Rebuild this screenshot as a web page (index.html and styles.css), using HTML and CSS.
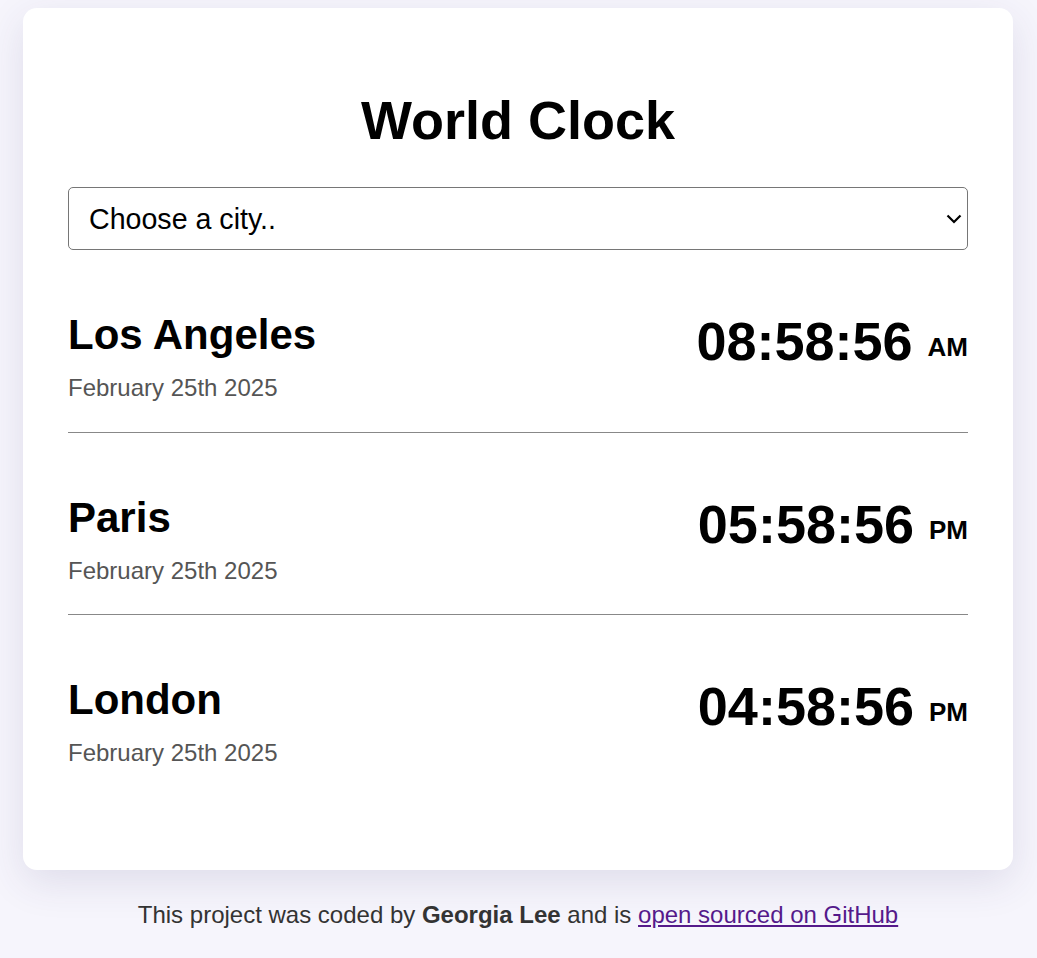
FILE: index.html
```html
<!DOCTYPE html>
<html lang="en">
<head>
<meta charset="utf-8">
<title>World Clock</title>
<link rel="stylesheet" href="styles.css">
</head>
<body>
<div class="card">
  <h1 class="title">World Clock</h1>
  <div class="select-wrap">
    <select class="city-select">
      <option>Choose a city..</option>
      <option>Tokyo</option>
      <option>Sydney</option>
    </select>
    <svg class="chevron" width="16" height="10" viewBox="0 0 16 10"><path d="M1.5 1.5 L8 8 L14.5 1.5" fill="none" stroke="#000" stroke-width="2.2"/></svg>
  </div>
  <div class="cities">
    <div class="city">
      <div class="city-info">
        <h2 class="city-name">Los Angeles</h2>
        <div class="city-date">February 25th 2025</div>
      </div>
      <div class="city-time">08:58:56 <small class="ampm">AM</small></div>
    </div>
    <div class="city">
      <div class="city-info">
        <h2 class="city-name">Paris</h2>
        <div class="city-date">February 25th 2025</div>
      </div>
      <div class="city-time">05:58:56 <small class="ampm">PM</small></div>
    </div>
    <div class="city">
      <div class="city-info">
        <h2 class="city-name">London</h2>
        <div class="city-date">February 25th 2025</div>
      </div>
      <div class="city-time">04:58:56 <small class="ampm">PM</small></div>
    </div>
  </div>
</div>
<footer class="footer">This project was coded by <strong>Georgia Lee</strong> and is <a class="footer-link" href="#">open sourced on GitHub</a></footer>
</body>
</html>
```
FILE: styles.css
```css
html, body {
  margin: 0;
  padding: 0;
}
body {
  background: #f6f5fc;
  font-family: "Liberation Sans", Arial, sans-serif;
  padding: 8px 1px 0 0;
  min-height: 950px;
}
.card {
  width: 990px;
  box-sizing: border-box;
  margin: 0 auto;
  background: #fff;
  border-radius: 14px;
  padding: 81px 45px 73px;
  box-shadow: 0 12px 40px rgba(60, 50, 110, 0.12);
}
.title {
  margin: 0;
  font-size: 54px;
  font-weight: bold;
  text-align: center;
  color: #000;
  line-height: 62px;
}
.select-wrap {
  position: relative;
  margin-top: 36px;
}
.city-select {
  -webkit-appearance: none;
  appearance: none;
  width: 100%;
  height: 63px;
  box-sizing: border-box;
  border: 1px solid #767676;
  border-radius: 5px;
  background: #fff;
  color: #000;
  font-family: "Liberation Sans", Arial, sans-serif;
  font-size: 28.6px;
  padding: 0 20px;
  display: block;
}
.chevron {
  position: absolute;
  right: 6px;
  top: 27px;
  pointer-events: none;
}
.city {
  display: flex;
  justify-content: space-between;
  align-items: flex-start;
  padding: 61px 0 30px;
  border-bottom: 1px solid #888;
}
.city:last-child {
  border-bottom: none;
}
.city-name {
  margin: 0;
  font-size: 42px;
  font-weight: bold;
  line-height: 48px;
  color: #000;
}
.city-date {
  margin-top: 15px;
  font-size: 24px;
  line-height: 27.6px;
  color: #555;
}
.city-time {
  margin-top: -1px;
  font-size: 54px;
  font-weight: bold;
  line-height: 62px;
  color: #000;
}
.ampm {
  font-size: 26px;
  vertical-align: 4px;
}
.footer {
  text-align: center;
  margin-top: 31px;
  font-size: 24px;
  line-height: 27.6px;
  color: #333;
}
.footer strong {
  font-weight: bold;
}
.footer-link {
  color: #551a8b;
}
```
